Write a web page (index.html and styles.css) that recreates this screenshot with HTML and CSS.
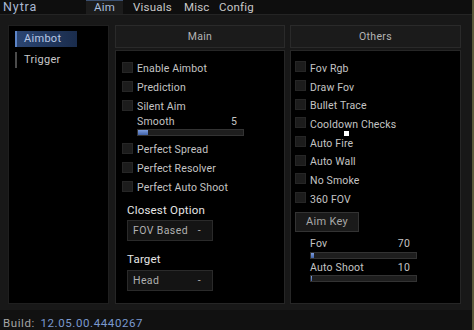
FILE: index.html
```html
<!DOCTYPE html>
<html lang="en">
<head>
    <meta charset="UTF-8">
    <meta name="viewport" content="width=device-width, initial-scale=1.0">
    <title>Nytra</title>
    <link rel="stylesheet" href="styles.css">
</head>
<body>
    <div class="window">
        <div class="topbar">
            <div class="brand">Nytra</div>
            <div class="tabs">
                <div class="tab active">Aim</div>
                <div class="tab visuals">Visuals</div>
                <div class="tab misc">Misc</div>
                <div class="tab">Config</div>
            </div>
        </div>

        <div class="content">
            <div class="sidebar">
                <div class="side-item active">Aimbot</div>
                <div class="side-item">Trigger</div>
            </div>

            <div class="panel">
                <div class="panel-head">Main</div>
                <div class="panel-body main-body">
                    <div class="row"><span class="check"></span>Enable Aimbot</div>
                    <div class="row"><span class="check"></span>Prediction</div>
                    <div class="row"><span class="check"></span>Silent Aim</div>
                    <div class="slider-block smooth">
                        <div class="slider-label"><span>Smooth</span><span>5</span></div>
                        <div class="slider"><div class="fill" style="width: 10px"></div></div>
                    </div>
                    <div class="row"><span class="check"></span>Perfect Spread</div>
                    <div class="row"><span class="check"></span>Perfect Resolver</div>
                    <div class="row"><span class="check"></span>Perfect Auto Shoot</div>

                    <div class="group-title first">Closest Option</div>
                    <div class="dropdown"><span>FOV Based</span><span>-</span></div>
                    <div class="group-title">Target</div>
                    <div class="dropdown"><span>Head</span><span>-</span></div>
                </div>
            </div>

            <div class="panel others">
                <div class="panel-head">Others</div>
                <div class="panel-body other-body">
                    <div class="row"><span class="check"></span>Fov Rgb</div>
                    <div class="row"><span class="check"></span>Draw Fov</div>
                    <div class="row"><span class="check"></span>Bullet Trace</div>
                    <div class="row"><span class="check"></span>Cooldown Checks</div>
                    <div class="row"><span class="check"></span>Auto Fire</div>
                    <div class="row"><span class="check"></span>Auto Wall</div>
                    <div class="row"><span class="check"></span>No Smoke</div>
                    <div class="row"><span class="check"></span>360 FOV</div>
                    <div class="key-button">Aim Key</div>
                    <div class="slider-block fov">
                        <div class="slider-label"><span>Fov</span><span>70</span></div>
                        <div class="slider"><div class="fill" style="width: 3px"></div></div>
                    </div>
                    <div class="slider-block shoot">
                        <div class="slider-label"><span>Auto Shoot</span><span>10</span></div>
                        <div class="slider"><div class="fill" style="width: 1px"></div></div>
                    </div>
                </div>
            </div>
        </div>

        <div class="footer">
            <span class="build">Build:</span>
            <span class="version">12.05.00.4440267</span>
        </div>

        <div class="cursor"></div>
    </div>
</body>
</html>
```

FILE: styles.css
```css
body {
    margin: 0;
    padding: 0;
    background: #5b5a3a;
    font-family: Roboto, 'Noto Sans', sans-serif;
    font-size: 10.5px;
    color: #c4c4c4;
}
.window {
    position: relative;
    width: 472px;
    height: 330px;
    background: #181818;
    display: flex;
    flex-direction: column;
    overflow: hidden;
}
.topbar {
    height: 14px;
    background: #0e0e0e;
    border-bottom: 1px solid #242424;
    display: flex;
    align-items: stretch;
}
.brand {
    width: 86px;
    padding-left: 3px;
    box-sizing: border-box;
    font-size: 12.5px;
    line-height: 14px;
    color: #a9b8d2;
    letter-spacing: 0.9px;
}
.tabs {
    display: flex;
}
.tab {
    font-size: 11.5px;
    line-height: 14px;
    color: #c8c8c8;
    letter-spacing: 0.2px;
}
.tab.active {
    width: 37px;
    box-sizing: border-box;
    text-align: center;
    background: #1c1c1c;
    border-top: 1px solid #3c5172;
    line-height: 13px;
    color: #a9bede;
}
.tab.visuals {
    width: 61px;
    box-sizing: border-box;
    padding-left: 10px;
}
.tab.misc {
    width: 35px;
}
.content {
    height: 295px;
    box-sizing: border-box;
    padding: 10px 0 0 8px;
    display: flex;
    align-items: flex-start;
}
.sidebar {
    width: 101px;
    height: 279px;
    box-sizing: border-box;
    background: #000;
    border: 1px solid #1f1f1f;
    padding: 5px 0 0 6px;
    margin-right: 6px;
}
.side-item {
    width: 62px;
    height: 16px;
    line-height: 16px;
    padding-left: 7px;
    box-sizing: border-box;
    border-left: 2px solid #4b4b4b;
    margin-bottom: 5px;
    font-size: 11px;
    color: #c8c8c8;
    letter-spacing: 0.3px;
}
.side-item.active {
    border-left-color: #5c84c8;
    background: linear-gradient(to right, #2b4572, #1a2c4c);
    color: #b9c9e6;
}
.panel {
    width: 170px;
    height: 279px;
    display: flex;
    flex-direction: column;
    gap: 2px;
}
.panel.others {
    width: 171px;
    margin-left: 5px;
}
.panel-head {
    height: 23px;
    box-sizing: border-box;
    background: #1b1b1b;
    border: 1px solid #2a2a2a;
    text-align: center;
    line-height: 21px;
    color: #b4b4b4;
    letter-spacing: 0.3px;
}
.panel-body {
    flex: 1;
    background: #000;
    border: 1px solid #262626;
    padding-top: 8px;
}
.main-body {
    padding-left: 6px;
}
.other-body {
    padding-left: 4px;
}
.row {
    height: 19px;
    display: flex;
    align-items: center;
    letter-spacing: 0.15px;
}
.other-body .row {
    height: 18.7px;
}
.check {
    width: 11px;
    height: 11px;
    box-sizing: border-box;
    background: #1c1c1c;
    border: 1px solid #262626;
    margin-right: 4px;
    margin-top: -3px;
}
.slider-block {
    margin-left: 15px;
    width: 107px;
}
.slider-label {
    display: flex;
    justify-content: space-between;
    height: 12px;
    line-height: 12px;
    padding-right: 7px;
    letter-spacing: 0.2px;
}
.slider {
    height: 7px;
    margin-top: 1px;
    box-sizing: border-box;
    background: #1e1e1e;
    border: 1px solid #333;
}
.fill {
    height: 100%;
    background: linear-gradient(to bottom, #7d9ee0, #4062a8);
}
.smooth {
    margin-bottom: 4px;
}
.group-title {
    margin: 11px 0 4px 5px;
    height: 14px;
    line-height: 14px;
    font-size: 11.5px;
    color: #e6e6e6;
    letter-spacing: 0.2px;
}
.group-title.first {
    margin-top: 6px;
    margin-bottom: 3px;
}
.dropdown {
    width: 86px;
    height: 21px;
    margin-left: 5px;
    box-sizing: border-box;
    background: #141414;
    border: 1px solid #2a2a2a;
    display: flex;
    justify-content: space-between;
    align-items: center;
    padding: 0 11px 0 5px;
    color: #b0b0b0;
    letter-spacing: 0.4px;
}
.key-button {
    width: 64px;
    height: 20px;
    margin-top: 3px;
    box-sizing: border-box;
    background: #1a1a1a;
    border: 1px solid #333;
    text-align: center;
    line-height: 18px;
    font-size: 11px;
    color: #a8a8a8;
    letter-spacing: 0.3px;
}
.fov {
    margin-top: 6px;
    margin-left: 15px;
}
.shoot {
    margin-top: 3px;
    margin-left: 15px;
}
.fov .slider {
    margin-top: 2px;
}
.footer {
    height: 20px;
    background: #111;
    padding-left: 3px;
    line-height: 27px;
    font-size: 11.5px;
    letter-spacing: 0.6px;
}
.build {
    color: #a4a4a4;
}
.version {
    color: #7a99cf;
    margin-left: 2px;
}
.cursor {
    position: absolute;
    left: 344px;
    top: 131px;
    width: 5px;
    height: 5px;
    background: #fff;
}
```
